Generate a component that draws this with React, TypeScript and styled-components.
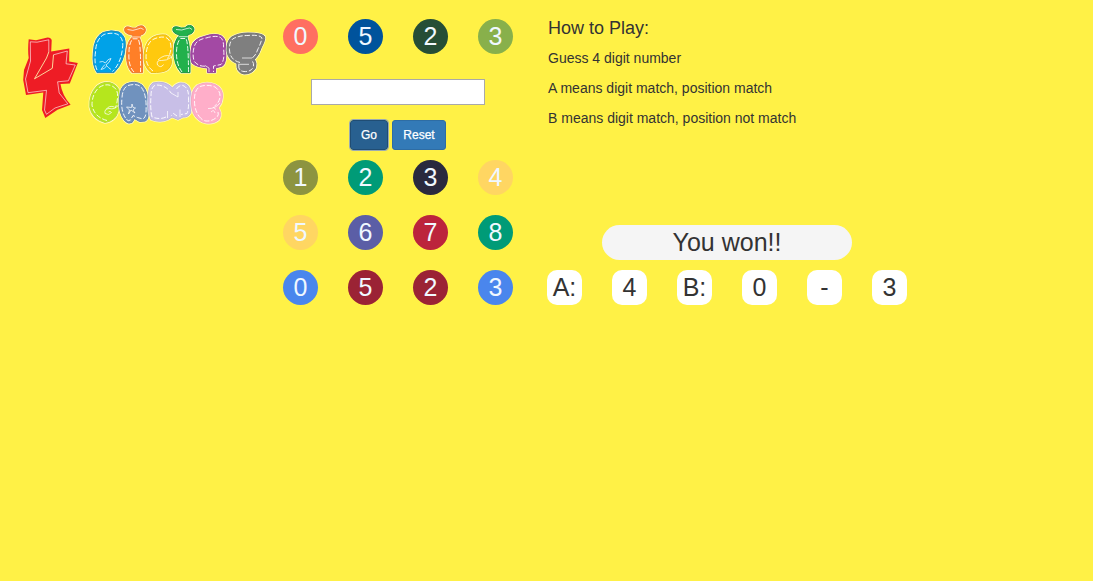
import React from 'react';
import styled, { createGlobalStyle } from 'styled-components';

const GlobalStyle = createGlobalStyle`
  * { box-sizing: border-box; }
  body {
    margin: 0;
    background: #fff146;
    color: #333;
    font: 14px/20px "Liberation Sans", Arial, sans-serif;
  }
`;

const Page = styled.main`
  display: grid;
  grid-template-columns: 273px 274px 1fr;
  min-height: 581px;
`;

const Logo = styled.svg`
  display: block;
  width: 273px;
  height: 135px;
`;

const Board = styled.section`
  display: flex;
  flex-direction: column;
  padding: 19px 0 0 10px;
`;

const DigitRow = styled.div`
  display: flex;
  gap: 30px;
  margin-bottom: 20px;
`;

const Digit = styled.span<{ $color: string }>`
  width: 35px;
  height: 35px;
  border-radius: 50%;
  background: ${(p) => p.$color};
  color: #f0f8ff;
  font-size: 25px;
  line-height: 35px;
  text-align: center;
`;

const GuessInput = styled.input`
  width: 174px;
  height: 26px;
  margin: 5px 0 15px 28px;
  padding: 1px 4px;
  border: 1px solid #a9a9a9;
  background: #fff;
  font: inherit;
`;

const Actions = styled.div`
  display: flex;
  gap: 4px;
  margin: 0 0 10px 67px;
`;

const Button = styled.button<{ $active?: boolean }>`
  width: ${(p) => (p.$active ? 38 : 54)}px;
  height: 30px;
  padding: 0;
  border: 1px solid ${(p) => (p.$active ? '#204d74' : '#2e6da4')};
  border-radius: 3px;
  outline: ${(p) => (p.$active ? '1px solid #9cabb0' : 'none')};
  background: ${(p) => (p.$active ? '#286090' : '#337ab7')};
  color: #fff;
  font: 12px/18px "Liberation Sans", Arial, sans-serif;
  -webkit-text-stroke: 0.25px #fff;
`;

const Side = styled.section`
  padding-top: 18px;
`;

const Rules = styled.div`
  height: 207px;
  padding-left: 1px;
`;

const Heading = styled.h4`
  margin: 0 0 10px;
  font-size: 18px;
  font-weight: 400;
  line-height: 20px;
`;

const Rule = styled.p`
  margin: 0 0 10px;
`;

const Result = styled.div`
  width: 250px;
  height: 35px;
  margin: 0 0 10px 55px;
  border-radius: 18px;
  background: #f5f5f5;
  font-size: 25px;
  line-height: 35px;
  text-align: center;
`;

const Score = styled.div`
  display: flex;
  gap: 30px;
`;

const ScoreBox = styled.span`
  width: 35px;
  height: 35px;
  border-radius: 10px;
  background: #fff;
  font-size: 25px;
  line-height: 35px;
  text-align: center;
  white-space: nowrap;
`;

type Entry = [string, string];

const answer: Entry[] = [['0', '#ff6f61'], ['5', '#00539c'], ['2', '#264e36'], ['3', '#88b04b']];
const guesses: Entry[][] = [
  [['1', '#8d9440'], ['2', '#009b77'], ['3', '#2a293e'], ['4', '#ffd662']],
  [['5', '#ffd662'], ['6', '#5b5ea6'], ['7', '#bc243c'], ['8', '#009b77']],
  [['0', '#4a86ed'], ['5', '#9b2335'], ['2', '#9b2335'], ['3', '#4a86ed']],
];

const Digits = ({ items }: { items: Entry[] }) => (
  <DigitRow>
    {items.map(([value, color], i) => (
      <Digit key={i} $color={color}>{value}</Digit>
    ))}
  </DigitRow>
);

interface BubbleProps {
  fill: string;
  edge: string;
  d: string;
  stitch: string;
  detail?: string;
}

const Bubble = ({ fill, edge, d, stitch, detail }: BubbleProps) => (
  <g strokeLinejoin="round" strokeLinecap="butt">
    <path d={d} fill={fill} stroke="#fff" strokeOpacity=".65" strokeWidth="2.4" />
    <path d={d} fill={fill} stroke={edge} strokeWidth="1" />
    <path d={stitch} fill="none" stroke="#fff" strokeWidth=".9" strokeDasharray="5 2" />
    {detail && <path d={detail} fill="none" stroke="#fff" strokeOpacity=".9" strokeWidth=".8" />}
  </g>
);

const GameLogo = () => (
  <Logo viewBox="0 0 273 135" aria-label="4 Digits Game">
    <path
      d="M28.7 39.3L36 40.2L47.5 37.4Q51.8 37.8 51.7 40.5L51.2 51.5L69.3 48.6L69.2 61.5L77.8 63L69.8 83.4L60.5 84Q62 95 70.6 104.8L57.5 109.8L45.3 118L42 110L43.3 92.5L26 95L23.2 80L24 70L28.7 58Q27.6 50 28.7 39.3Z"
      fill="#ee1c25"
    />
    <path
      d="M30.3 41.8L37 42.2L48.8 39.8L48.8 52M53.5 54.8L67.3 51L66 63.8L75.3 65L68.3 80.8L57.6 81.8L59.2 93L67.8 103.8L55 108L46.5 114.3L44.5 110L46.5 90.3L28 92.7L25.5 79L30.5 61L30.3 41.8"
      fill="none" stroke="#fff" strokeOpacity=".85" strokeWidth=".7"
    />
    <path
      d="M48.8 52L46.5 58L34.5 78.8L52.3 68.3L53.5 54.8"
      fill="none" stroke="#fff5b0" strokeWidth=".85"
    />
    <Bubble
      fill="#00a2e8" edge="#258bb8"
      d="M97 72.6Q92 65 93.3 53Q94 37 103 32.5Q111 29.5 119 32Q126 36 125.3 46Q124.5 62 114 72.6Z"
      stitch="M97 70Q94 63 95.5 52Q96 39 104 34.5Q112 32 118 34.5Q124 39 122.5 48Q121 63 112.5 71.5"
      detail="M99.5 62Q103 60.5 105.5 63Q108 58.5 111 58.5Q109.5 63 106 65Q108.5 68 111 69.5M105 64.5Q102.5 67 101 69.5Q105 69 106.5 66"
    />
    <Bubble
      fill="#ff7f27" edge="#e97a35"
      d="M132 72.6Q126 66 126.5 54Q127 43 131 38.5L133 35.2Q124.5 34 124.5 29.5Q125 25 132 28Q137 29 138 26.5Q144 24 145.5 29.5Q145 34.5 140.5 35L139.5 38Q143.5 45 142.5 72.6Z"
      stitch="M134 72Q128 66 129 52Q129 44 132.5 38.8H138Q141 43 140.5 72"
      detail="M127.5 29.5Q133 31.5 138 29Q141 27 143.5 29.5M131 37H140"
    />
    <Bubble
      fill="#ffc90e" edge="#e9bd13"
      d="M151 72.5Q143 66 144 55Q145 43 151 38.5Q157 34 166 35Q173 39 173 47Q173 54 170.5 57Q173.5 64 168 69.5Q163 73 151 72.5Z"
      stitch="M153 71Q145 65 146.2 54Q147 43 153 39.5Q160 36 166 37.5Q171 40 171 48Q170.5 54 167.5 58.5"
      detail="M172 57Q166 61 161.5 60.5Q156 60 157.5 65Q161 68.5 163.5 64.5M158 60Q164 54 171 56"
    />
    <Bubble
      fill="#22b14c" edge="#23924a"
      d="M181 72.6Q173.5 64 174 51Q174 43 177 38.5L179.5 35Q171.5 33 173 28Q175 25.5 181 28Q186 28.5 187 26Q192.5 24 194 29Q193.5 34 188 34.5L187.2 38Q190.5 45 190 72.6Z"
      stitch="M182 72Q176 64 176.5 51Q177 42 180.5 38.5H186Q188.5 44 188.5 72"
      detail="M176 29.5Q182 31 187 28.5Q190 27 192 29.5M178.5 36.7H188"
    />
    <Bubble
      fill="#a349a4" edge="#964799"
      d="M207.5 72.6V68Q196 67 192 63Q189.5 56 192 45.5Q194 39 204 36.5Q215 32.5 221.5 36Q226.5 39 225.5 48Q227 63 222.5 66L215.5 68V72.6Z"
      stitch="M205 66.2Q198 66.5 194 61Q192 53 194.5 46Q196 40 206 38Q216 35 220.5 37.5Q224 40 223.5 48Q225 60 221 64.5L213.5 66V72"
      detail="M205 65.5L209 68V72"
    />
    <Bubble
      fill="#7f7f7f" edge="#737373"
      d="M237 63.5Q228 60 227 51Q226.5 42 231 37.5Q238 33 248 33Q262 33 264.5 36.5Q265.5 40 261.5 47Q259 55 254.5 59.5Q257 63 255.5 68Q252 74 244 74Q236 72.5 237 63.5Z"
      stitch="M240 62.5Q230 60 229.5 50Q229 42 233 38.8Q239 35.5 248 35.5Q260 34.5 262 38Q261 43 257.5 50Q255 57 251.5 58M238.8 65Q238 71 244 71.5Q252 72 253.5 66Q254 62 251 60"
      detail="M242 58H252M238 64.3H249"
    />
    <Bubble
      fill="#b5e61d" edge="#b8d83a"
      d="M105 122.5Q92 119 89.8 107Q89 94 97 86Q105 80 113 83.8Q121 88 119.8 98Q119 115 114 118.5Q110 122 105 122.5Z"
      stitch="M107 120.5Q94 117 92 105Q92 94 99 87.5Q106 83 112 86Q118.5 89 117.5 98Q117 105 115 108"
      detail="M118.5 105Q115 110 109 108.5Q104 109 105 113.5Q109 116 111.5 112.5Q110 110.5 108.5 112M106 109.5Q109 105 114.5 107"
    />
    <Bubble
      fill="#7092be" edge="#6281aa"
      d="M124.5 120.5Q118 112 119.5 98Q120 87 126 84Q135 80 142 85Q149 92 148.5 108Q149 119 145.5 121L139.5 121.5L134.5 118.5L132 122.5Q128 124.5 124.5 120.5Z"
      stitch="M125.5 118Q120.5 110 122 98Q122.5 88 128 85.5Q137 83 141 87Q147 94 146 112Q146 117 143 119L137.5 117.5L133 115.5L130.5 120Q127.5 122 125.5 118"
      detail="M126.5 107L131.5 107.5L132 104L133 107.5L135.5 108L133 110L135 113L131 110L128.5 114L129.5 110Z"
    />
    <Bubble
      fill="#c8bfe7" edge="#bbb3d8"
      d="M151 119.5Q147.5 111 148.5 97Q148 86 153 83Q165 80 172.5 88Q175 84 180 83Q189 82 191 93Q192 105 190.5 113Q188 117.5 183 117L178 119.5L172 117L168 119.5Q160 123 151 119.5Z"
      stitch="M152 117Q150 108 151 96Q151 86 156 85Q166 85 171 93M176.5 89Q179 85 183 85.5Q189 88 188.5 98Q189 109 187 113.5L181 114.5M177 116L173.5 113.5L171 116M166 117Q160 120 152 117"
      detail="M171 93L178 97V92M167.5 118V111M180 117V109.5"
    />
    <Bubble
      fill="#ffaec9" edge="#f5a7be"
      d="M199 120Q192 115 191.5 104Q190.5 91 197 85.5Q206 81 215 84.5Q223 88 222.5 97Q222 104 218 108Q222.5 113 219 119.5Q214 124 206 123Q202 122.5 199 120Z"
      stitch="M201 118.5Q194.5 112 194.5 101Q194 90 200 86.5Q208 84 215 87Q220.5 91 220 97Q219 103 214.5 106M218 112Q219 115 217 117Q212 121.5 206 121Q203 120.5 201 118.5"
      detail="M208 108.5Q215 109 220 103M211 112Q214 109 215 113M213 107L216 109.5"
    />
  </Logo>
);

export default function App() {
  return (
    <>
      <GlobalStyle />
      <Page>
        <GameLogo />
        <Board>
          <Digits items={answer} />
          <GuessInput aria-label="Guess" />
          <Actions>
            <Button $active>Go</Button>
            <Button>Reset</Button>
          </Actions>
          {guesses.map((items, i) => <Digits key={i} items={items} />)}
        </Board>
        <Side>
          <Rules>
            <Heading>How to Play:</Heading>
            <Rule>Guess 4 digit number</Rule>
            <Rule>A means digit match, position match</Rule>
            <Rule>B means digit match, position not match</Rule>
          </Rules>
          <Result>You won!!</Result>
          <Score>
            {['A:', '4', 'B:', '0', '-', '3'].map((value, i) => (
              <ScoreBox key={i}>{value}</ScoreBox>
            ))}
          </Score>
        </Side>
      </Page>
    </>
  );
}
